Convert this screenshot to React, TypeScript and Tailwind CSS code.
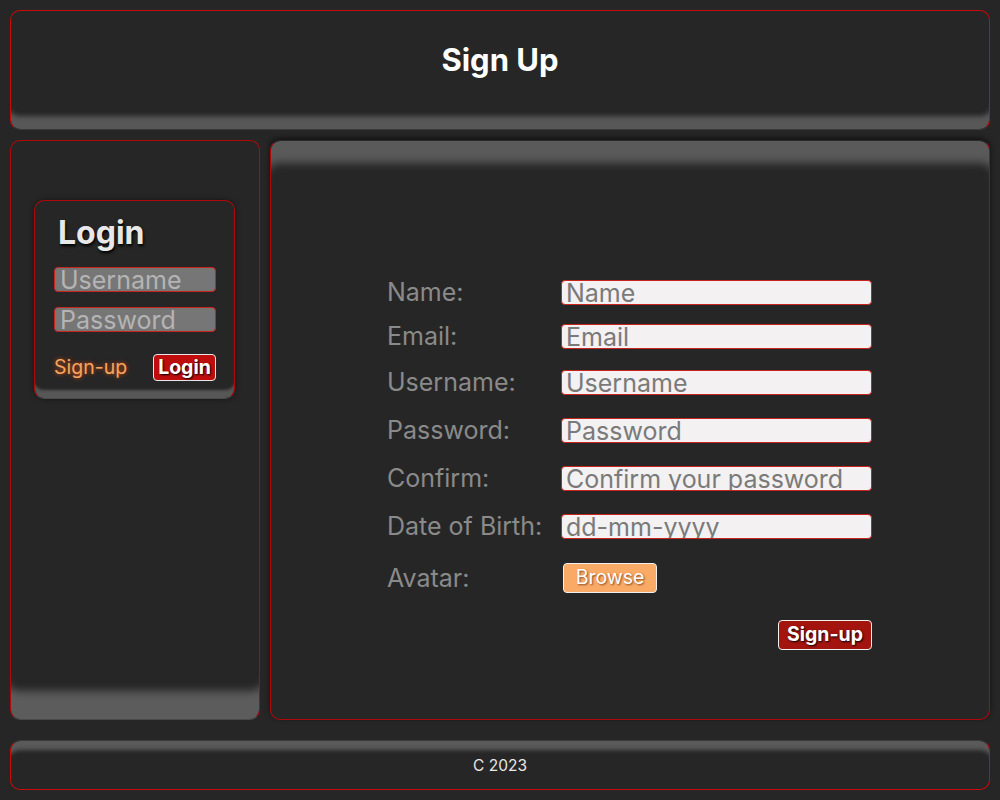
import React from "react";

const font = { fontFamily: "Inter, 'Noto Sans', sans-serif" };

function Row({ label, placeholder, mt }: { label: string; placeholder: string; mt: string }) {
  return (
    <div className={`flex items-center ${mt}`}>
      <div className="w-[174px] text-[25px] leading-none text-[#8a8a8a]">{label}</div>
      <input
        placeholder={placeholder}
        className="h-[25px] w-[311px] rounded-[4px] border border-[#c8241c] bg-[#f3f1f2] px-[4px] text-[25px] leading-none text-[#333] outline-none placeholder:text-[#7a7a7a]"
        style={font}
      />
    </div>
  );
}

export default function App() {
  return (
    <div className="min-h-[800px] bg-[#262626] p-[10px]" style={font}>
      <header className="flex h-[120px] items-center justify-center rounded-[10px] border border-[#c80a0a] border-b-[#3a3a3a] pb-[20px] shadow-[inset_0_-17px_5px_-4px_#575757]">
        <h1 className="text-[31px] font-bold text-white">Sign Up</h1>
      </header>

      <div className="mt-[10px] flex h-[580px] gap-[10px]">
        <aside className="w-[250px] rounded-[10px] border border-[#b00808] border-b-[#4a4a4a] pt-[59px] pl-[23px] shadow-[inset_0_-36px_9px_-8px_#5c5c5c]">
          <div className="h-[199px] w-[201px] rounded-[10px] border border-[#b00808] border-b-[#4a4a4a] pl-[19px] pt-[13px] shadow-[inset_0_-10px_3px_-2px_#575757,0_0_5px_#151515]">
            <div className="ml-[4px] text-[32px] font-bold leading-[38px] text-[#e8e8e8] [text-shadow:1px_2px_3px_#000]">Login</div>
            <input
              placeholder="Username"
              className="mt-[15px] block h-[25px] w-[162px] rounded-[4px] border border-[#c8241c] bg-[#767676] px-[5px] text-[25px] leading-none outline-none placeholder:text-[#b4b4b4]"
              style={font}
            />
            <input
              placeholder="Password"
              className="mt-[15px] block h-[25px] w-[162px] rounded-[4px] border border-[#c8241c] bg-[#767676] px-[5px] text-[25px] leading-none outline-none placeholder:text-[#b4b4b4]"
              style={font}
            />
            <div className="mt-[22px] flex w-[162px] items-center justify-between">
              <span className="text-[19.5px] leading-none text-[#f7a45e] [text-shadow:0_0_4px_#d04a10]">Sign-up</span>
              <button className="h-[27px] w-[63px] rounded-[4px] border border-[#e8e8e8] bg-[#bf0d0d] text-[19.5px] font-bold leading-none text-white [text-shadow:1px_1px_2px_#000]">
                Login
              </button>
            </div>
          </div>
        </aside>

        <main className="flex-1 rounded-[10px] border border-[#b00808] border-t-[#2a2a2a] pt-[139px] pl-[116px] shadow-[inset_0_28px_9px_-6px_#5a5a5a,0_-2px_5px_#111]">
          <Row label="Name:" placeholder="Name" mt="" />
          <Row label="Email:" placeholder="Email" mt="mt-[19px]" />
          <Row label="Username:" placeholder="Username" mt="mt-[21px]" />
          <Row label="Password:" placeholder="Password" mt="mt-[23px]" />
          <Row label="Confirm:" placeholder="Confirm your password" mt="mt-[23px]" />
          <Row label="Date of Birth:" placeholder="dd-mm-yyyy" mt="mt-[23px]" />
          <div className="mt-[24px] flex items-center">
            <div className="w-[176px] text-[25px] leading-none text-[#8a8a8a]">Avatar:</div>
            <button className="h-[30px] w-[94px] rounded-[4px] border border-[#f0f0f0] bg-[#f9aa66] text-[19.5px] leading-none text-white [text-shadow:1px_1px_2px_#8a4a20]">
              Browse
            </button>
          </div>
          <div className="mt-[27px] flex w-[485px] justify-end">
            <button className="h-[30px] w-[94px] rounded-[4px] border border-[#f0f0f0] bg-[#a3140e] text-[19.5px] font-bold leading-none text-white [text-shadow:1px_1px_2px_#000]">
              Sign-up
            </button>
          </div>
        </main>
      </div>

      <footer className="mt-[20px] flex h-[50px] items-center justify-center rounded-[10px] border border-[#c80a0a] border-t-[#3a3a3a] pt-[2px] shadow-[inset_0_13px_4px_-4px_#5a5a5a]">
        <span className="text-[15.5px] text-[#e8e8e8]">C 2023</span>
      </footer>
    </div>
  );
}
